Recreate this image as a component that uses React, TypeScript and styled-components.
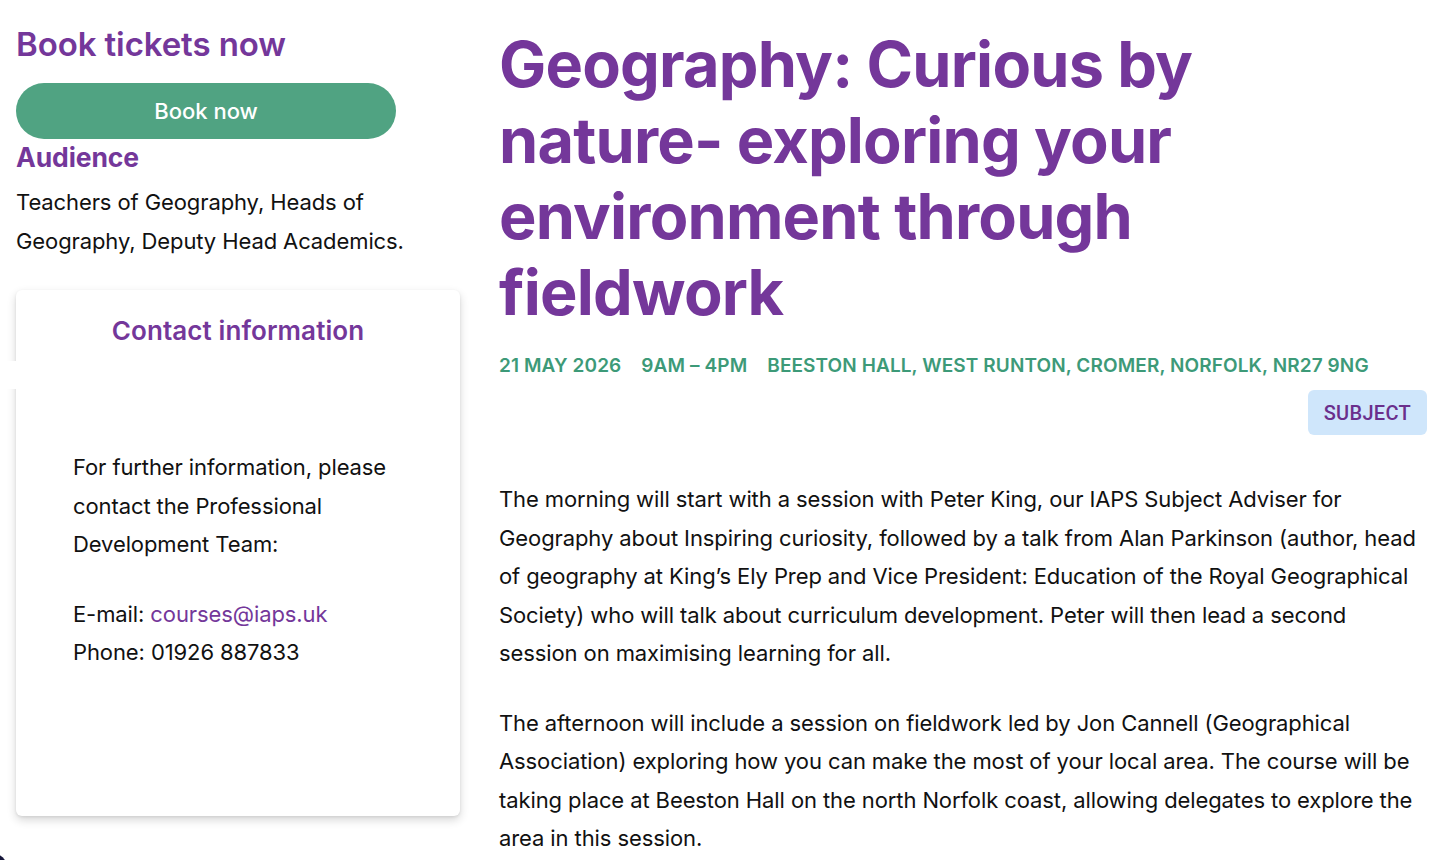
import React from "react";
import styled, { createGlobalStyle } from "styled-components";

const purple = "#74379a";
const green = "#50a382";
const metaGreen = "#3d9a78";

const GlobalStyle = createGlobalStyle`
  html, body {
    margin: 0;
    padding: 0;
    background: #ffffff;
    font-family: "Inter", "Noto Sans", sans-serif;
    color: #111111;
    overflow: hidden;
  }
  * { box-sizing: border-box; }
`;

const Page = styled.div`
  display: grid;
  grid-template-columns: 444px 1fr;
  column-gap: 39px;
  padding: 22px 29px 0 16px;
  height: 860px;
`;

const Sidebar = styled.aside`
  display: flex;
  flex-direction: column;
`;

const SideHeading = styled.h2`
  margin: 0;
  font-size: 33px;
  line-height: 44px;
  font-weight: 600;
  letter-spacing: -0.1px;
  color: ${purple};
`;

const BookButton = styled.button`
  margin-top: 17px;
  width: 380px;
  height: 56px;
  border: none;
  border-radius: 28px;
  background: ${green};
  color: #ffffff;
  font-family: inherit;
  font-size: 22px;
  font-weight: 500;
  letter-spacing: 0;
  cursor: pointer;
`;

const SubHeading = styled.h3`
  margin: 2px 0 0;
  font-size: 26.5px;
  line-height: 32px;
  font-weight: 700;
  letter-spacing: -0.1px;
  color: ${purple};
`;

const Body = styled.p<{ $top?: number }>`
  margin: ${(p) => p.$top ?? 0}px 0 0;
  font-size: 22px;
  line-height: 38.5px;
  font-weight: 400;
  letter-spacing: -0.1px;
  color: #111111;
`;

const Card = styled.section`
  margin-top: 30px;
  height: 526px;
  background: #ffffff;
  border-radius: 6px;
  box-shadow: 0 4px 10px rgba(0, 0, 0, 0.16), 0 1px 3px rgba(0, 0, 0, 0.08);
  padding: 24px 36px 0 57px;
  display: flex;
  flex-direction: column;
`;

const CardTitle = styled.h3`
  margin: 0 0 0 -21px;
  text-align: center;
  font-size: 26px;
  line-height: 34px;
  font-weight: 600;
  letter-spacing: 0.1px;
  color: ${purple};
`;

const CardText = styled.div`
  margin-top: 100px;
  display: flex;
  flex-direction: column;
  gap: 31px;
`;

const Link = styled.a`
  color: ${purple};
  text-decoration: none;
`;

const Main = styled.main`
  display: flex;
  flex-direction: column;
`;

const Title = styled.h1`
  margin: 4px 0 0;
  max-width: 720px;
  font-size: 63px;
  line-height: 76px;
  font-weight: 700;
  letter-spacing: -0.8px;
  color: ${purple};
`;

const Meta = styled.div`
  margin-top: 24px;
  display: flex;
  gap: 20px;
  font-size: 19px;
  line-height: 24px;
  font-weight: 600;
  text-transform: uppercase;
  letter-spacing: 0.1px;
  color: ${metaGreen};
`;

const TagRow = styled.div`
  margin-top: 12px;
  display: flex;
  justify-content: flex-end;
`;

const Tag = styled.span`
  display: inline-flex;
  align-items: center;
  height: 45px;
  padding: 0 16px;
  border-radius: 6px;
  background: #cfe6fb;
  color: #6a2f8c;
  font-family: "Roboto", "Liberation Sans", Arial, sans-serif;
  font-size: 20px;
  font-weight: 500;
  letter-spacing: 0.3px;
`;

const Paragraphs = styled.div`
  margin-top: 45px;
  display: flex;
  flex-direction: column;
  gap: 31px;
`;

const SideTab = styled.div`
  position: fixed;
  left: 0;
  top: 361px;
  width: 16px;
  height: 28px;
  background: #ffffff;
`;

const ChatBubble = styled.div`
  position: fixed;
  left: -52px;
  bottom: -52px;
  width: 64px;
  height: 64px;
  border-radius: 50%;
  background: #16163a;
`;

export default function App() {
  return (
    <>
      <GlobalStyle />
      <Page>
        <Sidebar>
          <SideHeading>Book tickets now</SideHeading>
          <BookButton>Book now</BookButton>
          <SubHeading>Audience</SubHeading>
          <Body $top={10}>
            Teachers of Geography, Heads of Geography, Deputy Head Academics.
          </Body>
          <Card>
            <CardTitle>Contact information</CardTitle>
            <CardText>
              <Body>
                For further information, please contact the Professional
                Development Team:
              </Body>
              <Body>
                E-mail: <Link href="#">courses@iaps.uk</Link>
                <br />
                Phone: 01926 887833
              </Body>
            </CardText>
          </Card>
        </Sidebar>
        <Main>
          <Title>
            Geography: Curious by nature- exploring your environment through
            fieldwork
          </Title>
          <Meta>
            <span>21 May 2026</span>
            <span>9am – 4pm</span>
            <span>Beeston Hall, West Runton, Cromer, Norfolk, NR27 9NG</span>
          </Meta>
          <TagRow>
            <Tag>SUBJECT</Tag>
          </TagRow>
          <Paragraphs>
            <Body>
              The morning will start with a session with Peter King, our IAPS
              Subject Adviser for Geography about Inspiring curiosity, followed
              by a talk from Alan Parkinson (author, head of geography at
              King’s Ely Prep and Vice President: Education of the Royal
              Geographical Society) who will talk about curriculum development.
              Peter will then lead a second session on maximising learning for
              all.
            </Body>
            <Body>
              The afternoon will include a session on fieldwork led by Jon
              Cannell (Geographical Association) exploring how you can make the
              most of your local area. The course will be taking place at
              Beeston Hall on the north Norfolk coast, allowing delegates to
              explore the area in this session.
            </Body>
          </Paragraphs>
        </Main>
      </Page>
      <SideTab />
      <ChatBubble />
    </>
  );
}
